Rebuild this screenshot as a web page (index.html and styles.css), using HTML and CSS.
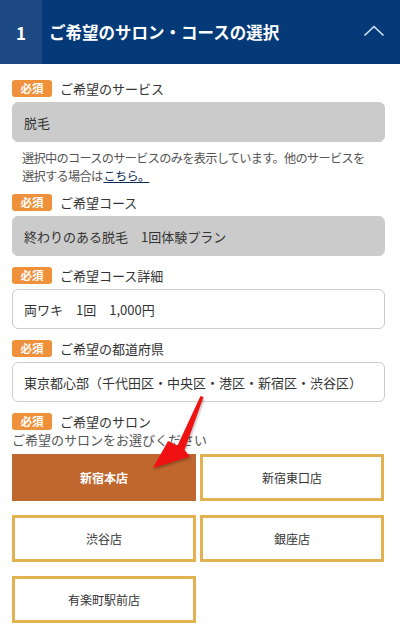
FILE: index.html
```html
<!DOCTYPE html>
<html lang="ja">

<head>
    <meta charset="UTF-8">
    <meta name="viewport" content="width=device-width, initial-scale=1.0">
    <title>ご希望のサロン・コースの選択</title>
    <link rel="stylesheet" href="styles.css">
</head>

<body>
    <div class="page">
        <div class="step-header">
            <div class="step-num">1</div>
            <div class="step-title">ご希望のサロン・コースの選択</div>
            <svg class="step-toggle" width="22" height="12" viewBox="0 0 22 12">
                <polyline points="1.5,10.5 11,1.5 20.5,10.5" fill="none" stroke="#d8e6f7" stroke-width="1.6" />
            </svg>
        </div>

        <div class="content">
            <div class="field first">
                <div class="field-label"><span class="badge">必須</span>ご希望のサービス</div>
                <div class="box readonly">脱毛</div>
                <p class="note">選択中のコースのサービスのみを表示しています。他のサービスを<br>選択する場合は<a href="#">こちら。</a></p>
            </div>

            <div class="field after-note">
                <div class="field-label"><span class="badge">必須</span>ご希望コース</div>
                <div class="box readonly">終わりのある脱毛　1回体験プラン</div>
            </div>

            <div class="field">
                <div class="field-label"><span class="badge">必須</span>ご希望コース詳細</div>
                <div class="box">両ワキ　1回　1,000円</div>
            </div>

            <div class="field">
                <div class="field-label"><span class="badge">必須</span>ご希望の都道府県</div>
                <div class="box">東京都心部（千代田区・中央区・港区・新宿区・渋谷区）</div>
            </div>

            <div class="field">
                <div class="field-label"><span class="badge">必須</span>ご希望のサロン</div>
                <p class="hint">ご希望のサロンをお選びください</p>
                <div class="salon-list">
                    <button class="salon selected">新宿本店</button>
                    <button class="salon">新宿東口店</button>
                    <button class="salon">渋谷店</button>
                    <button class="salon">銀座店</button>
                    <button class="salon">有楽町駅前店</button>
                </div>
            </div>
        </div>

        <!-- pointer drawn over the form -->
        <svg class="pointer" width="64" height="84" viewBox="0 0 64 84">
            <polygon points="52.5,6 55.5,7 36.5,60 42,66.5 5,78 20,51 29.5,55.5" fill="#f01212" />
        </svg>
    </div>
</body>

</html>
```

FILE: styles.css
```css
body {
    margin: 0;
    font-family: "Noto Sans CJK JP", "Noto Sans", sans-serif;
    color: #333;
    background-color: #fff;
}

.page {
    position: relative;
    width: 400px;
    height: 630px;
    overflow: hidden;
}

.step-header {
    display: flex;
    align-items: center;
    height: 64px;
    background-color: #033a77;
    color: #fff;
}

.step-num {
    width: 42px;
    height: 100%;
    display: flex;
    align-items: center;
    justify-content: center;
    background-color: #1d4a82;
    font-size: 17px;
    font-weight: bold;
}

.step-title {
    flex: 1;
    padding-left: 7px;
    font-size: 16.5px;
    font-weight: bold;
}

.step-toggle {
    margin-right: 15px;
    margin-bottom: 2px;
}

.content {
    padding: 0 15px 0 12px;
}

.field {
    margin-top: 11px;
}

.field.first {
    margin-top: 16px;
}

.field.after-note {
    margin-top: 9px;
}

.field-label {
    display: flex;
    align-items: center;
    height: 17px;
    font-size: 13px;
    color: #333;
}

.badge {
    display: inline-block;
    width: 40px;
    height: 17px;
    line-height: 17px;
    margin-right: 8px;
    text-align: center;
    font-size: 11.5px;
    font-weight: bold;
    color: #fff;
    background-color: #ef913b;
    border-radius: 3px;
}

.box {
    box-sizing: border-box;
    height: 40px;
    margin-top: 5px;
    padding: 0 11px;
    display: flex;
    align-items: center;
    font-size: 13px;
    color: #333;
    border: 1px solid #ccc;
    border-radius: 6px;
}

.box.readonly {
    background-color: #cbcbcb;
    border-color: #cbcbcb;
}

.note {
    margin: 7px 0 0;
    padding: 0 10px;
    font-size: 12.2px;
    line-height: 18px;
    letter-spacing: -0.7px;
    color: #555;
}

.note a {
    padding-left: 1px;
    color: #0b2a5a;
}

.hint {
    margin: 2px 0 0;
    font-size: 13px;
    line-height: 16px;
    color: #555;
}

.salon-list {
    display: grid;
    grid-template-columns: 184px 184px;
    column-gap: 4px;
    row-gap: 14px;
    margin-top: 6px;
}

.salon {
    height: 47px;
    font-family: inherit;
    font-size: 12px;
    color: #333;
    background-color: #fff;
    border: 3px solid #e3b250;
    cursor: pointer;
}

.salon.selected {
    background-color: #c0672f;
    border-color: #c0672f;
    color: #fff;
    font-weight: bold;
}

.pointer {
    position: absolute;
    left: 148px;
    top: 390px;
    filter: drop-shadow(1px 2px 1px rgba(0, 0, 0, 0.25));
}
```
